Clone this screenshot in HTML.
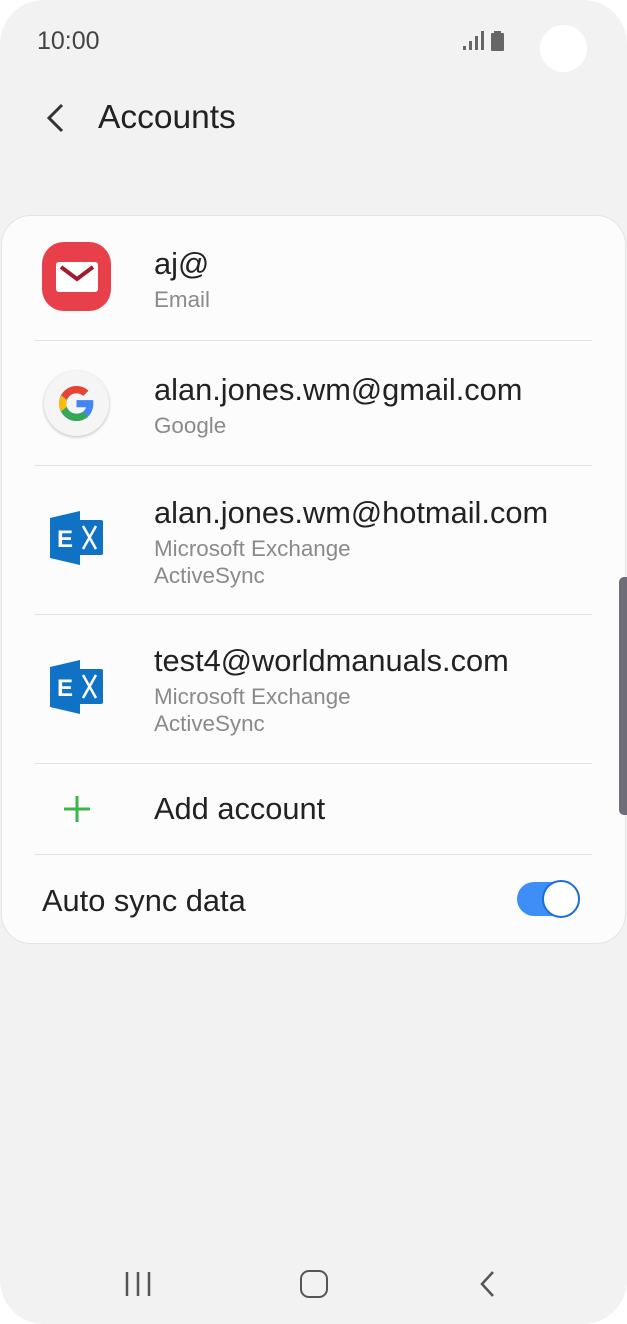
<!DOCTYPE html>
<html><head><meta charset="utf-8"><style>
*{margin:0;padding:0;box-sizing:border-box}
body{width:627px;height:1324px;background:#fff;font-family:"Liberation Sans",Roboto,sans-serif;position:relative;overflow:hidden}
.phone{position:absolute;left:0;top:0;width:627px;height:1324px;background:#f2f2f2;border-radius:44px}
.t{position:absolute;white-space:nowrap}
.card{position:absolute;left:1px;top:215px;width:625px;height:729px;background:#fcfcfc;border-radius:30px;border:1px solid #e4e4e4}
.sep{position:absolute;left:35px;width:557px;height:1px;background:#e2e2e2}
.main{font-size:30.8px;color:#222}
.sub{font-size:22.4px;color:#8a8a8a}
</style></head><body>
<div class="phone">
<div class="t" style="left:37px;top:27px;font-size:25px;color:#444">10:00</div>
<svg style="position:absolute;left:462px;top:30px" width="46" height="22">
<rect x="1" y="16" width="3" height="4" fill="#666"/><rect x="7" y="11" width="3" height="9" fill="#666"/><rect x="13" y="6" width="3" height="14" fill="#666"/><rect x="19" y="1" width="3" height="19" fill="#666"/>
<rect x="29" y="3" width="13" height="18" rx="1" fill="#666"/><rect x="32" y="1" width="7" height="3" fill="#666"/>
</svg>
<div style="position:absolute;left:540px;top:25px;width:47px;height:47px;border-radius:50%;background:#fff"></div>
<svg style="position:absolute;left:42px;top:103px" width="24" height="30"><path d="M20 2 L7 15 L20 28" stroke="#333" stroke-width="3" fill="none"/></svg>
<div class="t" style="left:98px;top:99px;font-size:33.5px;color:#222">Accounts</div>

<div class="card"></div>
<div style="position:absolute;left:619px;top:577px;width:8px;height:238px;background:#6e6d78;border-radius:5px 0 0 5px"></div>

<div style="position:absolute;left:42px;top:242px;width:69px;height:69px;border-radius:22px;background:#e8404b"></div>
<div style="position:absolute;left:56px;top:262px;width:42px;height:30px;background:#fff;border-radius:3px"></div>
<svg style="position:absolute;left:56px;top:262px" width="42" height="30"><path d="M5 5 L21 17 L37 5" stroke="#a01c2f" stroke-width="4" fill="none"/></svg>
<div class="t main" style="left:154px;top:246px">aj@</div>
<div class="t sub" style="left:154px;top:287px">Email</div>
<div class="sep" style="top:340px"></div>

<div style="position:absolute;left:44px;top:371px;width:65px;height:65px;border-radius:50%;background:#f5f5f5;box-shadow:0 1px 3px rgba(0,0,0,.25)"></div>
<svg style="position:absolute;left:56px;top:383px" width="41" height="41" viewBox="0 0 48 48">
<path d="M43.6 20H24v8.4h11.3C33.7 33.1 29.4 36 24 36c-6.6 0-12-5.4-12-12s5.4-12 12-12c3 0 5.8 1.1 7.9 3l6-6C34.3 5.6 29.4 3.5 24 3.5 12.7 3.5 3.5 12.7 3.5 24S12.7 44.5 24 44.5c10.3 0 19.7-7.5 19.7-20.5 0-1.3-.1-2.6-.1-4z" fill="#4285f4"/>
<path d="M6.3 14.7l6.6 4.8C14.7 15.1 19 12 24 12c3 0 5.8 1.1 7.9 3l6-6C34.3 5.6 29.4 3.5 24 3.5c-7.9 0-14.7 4.5-17.7 11.2z" fill="#ea4335"/>
<path d="M24 44.5c5.3 0 10.1-2 13.7-5.3l-6.3-5.4C29.4 35.3 26.8 36 24 36c-5.3 0-9.700-3.300-11.300-8.100l-6.500 5C9.400 39.800 16.100 44.500 24 44.500z" fill="#34a853"/>
<path d="M12.7 27.900c-.5-1.200-.7-2.500-.7-3.900s.2-2.700.7-4L6.300 14.700C4.500 17.500 3.500 20.700 3.500 24s1 6.500 2.700 9.100z" fill="#fbbc05"/>
</svg>
<div class="t main" style="left:154px;top:372px">alan.jones.wm@gmail.com</div>
<div class="t sub" style="left:154px;top:413px">Google</div>
<div class="sep" style="top:465px"></div>

<svg style="position:absolute;left:49px;top:510px" width="56" height="56" viewBox="0 0 56 56">
<path d="M1 8 L31 1 L31 55 L1 48 Z" fill="#0f72c4"/>
<rect x="27" y="10" width="27" height="35" rx="2" fill="#0f72c4"/>
<path d="M34 16 L47 39 M47 16 L34 39" stroke="#fff" stroke-width="2.5" fill="none"/>
<text x="8" y="37" font-family="Liberation Sans" font-weight="bold" font-size="24" fill="#fff">E</text>
</svg>
<div class="t main" style="left:154px;top:495px">alan.jones.wm@hotmail.com</div>
<div class="t sub" style="left:154px;top:536px">Microsoft Exchange</div>
<div class="t sub" style="left:154px;top:563px">ActiveSync</div>
<div class="sep" style="top:614px"></div>

<svg style="position:absolute;left:49px;top:659px" width="56" height="56" viewBox="0 0 56 56">
<path d="M1 8 L31 1 L31 55 L1 48 Z" fill="#0f72c4"/>
<rect x="27" y="10" width="27" height="35" rx="2" fill="#0f72c4"/>
<path d="M34 16 L47 39 M47 16 L34 39" stroke="#fff" stroke-width="2.5" fill="none"/>
<text x="8" y="37" font-family="Liberation Sans" font-weight="bold" font-size="24" fill="#fff">E</text>
</svg>
<div class="t main" style="left:154px;top:643px">test4@worldmanuals.com</div>
<div class="t sub" style="left:154px;top:684px">Microsoft Exchange</div>
<div class="t sub" style="left:154px;top:711px">ActiveSync</div>
<div class="sep" style="top:763px"></div>

<svg style="position:absolute;left:62px;top:794px" width="30" height="30"><path d="M15 2 V28 M2 15 H28" stroke="#3cb54a" stroke-width="3"/></svg>
<div class="t main" style="left:154px;top:791px">Add account</div>
<div class="sep" style="top:854px"></div>

<div class="t main" style="left:42px;top:883px">Auto sync data</div>
<div style="position:absolute;left:517px;top:882px;width:54px;height:34px;border-radius:17px;background:#3e8ef7"></div>
<div style="position:absolute;left:542px;top:880px;width:38px;height:38px;border-radius:50%;background:#fff;border:2px solid #1a6ed8"></div>

<svg style="position:absolute;left:124px;top:1270px" width="30" height="28"><path d="M3 2V26 M14 2V26 M25 2V26" stroke="#555" stroke-width="2.5"/></svg>
<div style="position:absolute;left:300px;top:1270px;width:28px;height:28px;border-radius:9px;border:2.5px solid #555"></div>
<svg style="position:absolute;left:478px;top:1270px" width="20" height="28"><path d="M15 2 L4 14 L15 26" stroke="#555" stroke-width="2.5" fill="none"/></svg>
</div>
</body></html>
